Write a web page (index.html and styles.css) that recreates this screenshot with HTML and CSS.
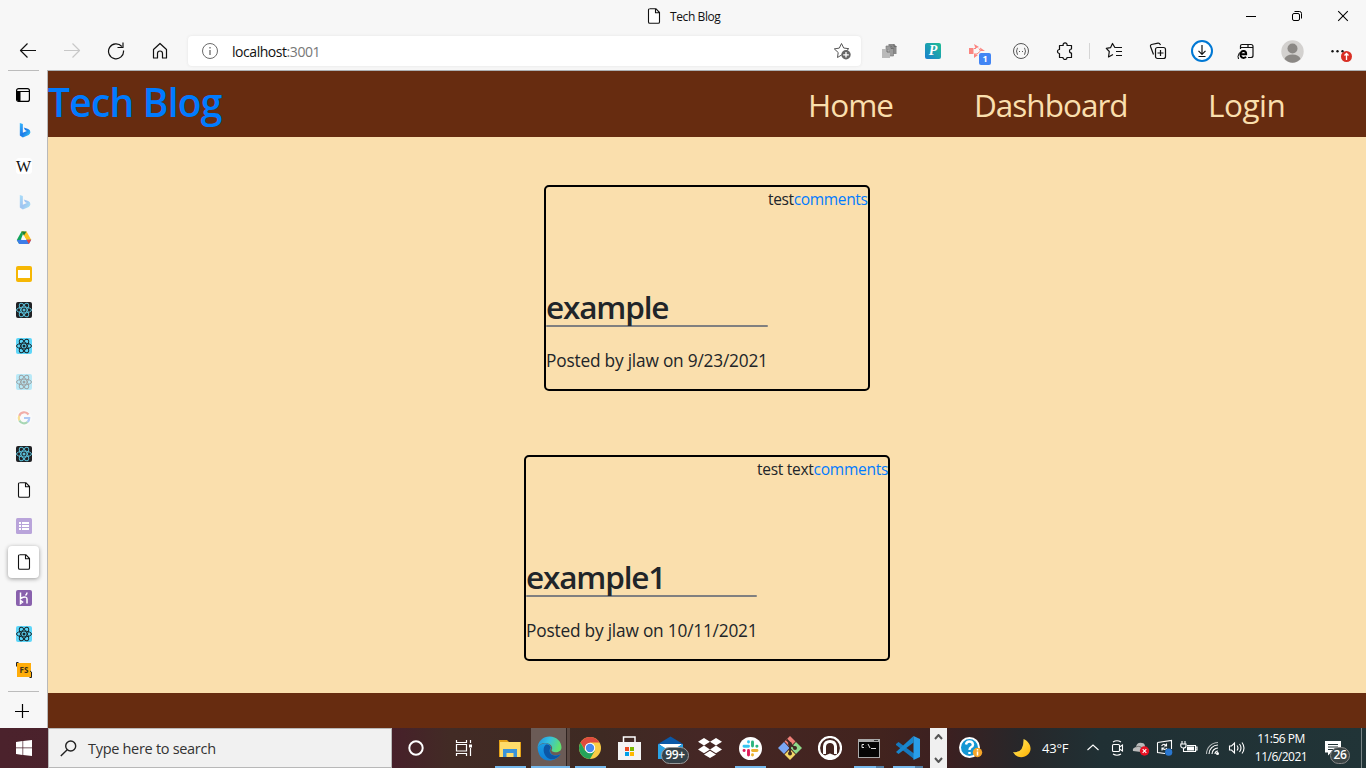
FILE: index.html
```html
<!DOCTYPE html>
<html lang="en">
<head>
<meta charset="utf-8">
<title>Tech Blog</title>
<link rel="stylesheet" href="styles.css">
</head>
<body>
<svg class="defs" width="0" height="0">
  <defs>
    <linearGradient id="bing" x1="0" y1="0" x2="1" y2="1"><stop offset="0" stop-color="#37bdff"/><stop offset=".5" stop-color="#1d78e8"/><stop offset="1" stop-color="#36d1f5"/></linearGradient>
    <linearGradient id="edge1" x1="0" y1="0" x2="1" y2=".3"><stop offset="0" stop-color="#1f8fdc"/><stop offset=".5" stop-color="#35bfe0"/><stop offset="1" stop-color="#5fe070"/></linearGradient>
    <linearGradient id="edge2" x1="0" y1="0" x2="0" y2="1"><stop offset="0" stop-color="#1b9de2"/><stop offset="1" stop-color="#0f7fd6"/></linearGradient>
    <linearGradient id="moon" x1="0" y1="0" x2="1" y2="1"><stop offset="0" stop-color="#fff06a"/><stop offset="1" stop-color="#ffb000"/></linearGradient>
    <symbol id="doc" viewBox="0 0 16 16"><path d="M4 .7H9.8L13.500 4.500V14a1.300 1.300 0 0 1-1.300 1.300H3.800A1.300 1.300 0 0 1 2.500 14V2A1.300 1.300 0 0 1 3.800.700M9.500.900V4.800H13.400" fill="#fff" stroke="#111" stroke-width="1.100" stroke-linejoin="round"/></symbol>
    <symbol id="bingb" viewBox="0 0 16 16"><path d="M3 .5 6.200 1.700V11L10.500 9 8.500 8 7.200 5.200 12 7Q14.300 8 14.300 10.500 14 12.500 12.500 13.200L6.200 16 3 13.800Z" fill="url(#bing)"/></symbol>
    <symbol id="atom" viewBox="0 0 16 16"><g fill="none" stroke="currentColor" stroke-width="1"><ellipse cx="8" cy="8" rx="7.500" ry="2.900"/><ellipse cx="8" cy="8" rx="7.500" ry="2.900" transform="rotate(60 8 8)"/><ellipse cx="8" cy="8" rx="7.500" ry="2.900" transform="rotate(120 8 8)"/></g><circle cx="8" cy="8" r="1.500" fill="currentColor"/></symbol>
  </defs>
</svg>

<div class="titlebar">
  <div class="tab-title"><svg width="16" height="16"><use href="#doc"/></svg><span>Tech Blog</span></div>
  <div class="window-controls">
    <svg width="12" height="12" viewBox="0 0 12 12"><path d="M1 6.500H11" stroke="#000"/></svg>
    <svg width="12" height="12" viewBox="0 0 12 12" fill="none" stroke="#000"><rect x="1.500" y="3.500" width="7" height="7" rx="1.500"/><path d="M3.500 1.500H8.500Q10.500 1.500 10.500 3.500V8.500"/></svg>
    <svg width="12" height="12" viewBox="0 0 12 12"><path d="M1.200 1.200 10.800 10.800M10.800 1.200 1.200 10.800" stroke="#000" stroke-width="1.050"/></svg>
  </div>
</div>

<div class="toolbar">
  <div class="tool"><svg width="18" height="18" viewBox="0 0 18 18"><path d="M17 8.500H1.500M8.500 1.500 1.500 8.500 8.500 15.500" class="line"/></svg></div>
  <div class="tool faded"><svg width="18" height="18" viewBox="0 0 18 18"><path d="M1 8.500H16.500M9.500 1.500 16.500 8.500 9.500 15.500" class="line"/></svg></div>
  <div class="tool"><svg width="18" height="18" viewBox="0 0 18 18"><path d="M16.500 8.500A7.500 7.500 0 1 1 14.800 4.500M16 .5V5.500H10.500" class="line"/></svg></div>
  <div class="tool"><svg width="16" height="18" viewBox="0 0 16 18"><path d="M1.500 7.500 8 1.500 14.500 7.500V16H10.500V11.500Q10.500 9 8 9T5.500 11.500V16H1.500Z" class="line"/></svg></div>
  <div class="address">
    <svg width="18" height="18" viewBox="0 0 18 18" fill="none" stroke="#6b6b6b"><circle cx="9" cy="9" r="7.500"/><path d="M9 8V13M9 5V6.500" stroke-width="1.300"/></svg>
    <span class="url">localhost<span class="port">:3001</span></span>
    <svg class="favorite" width="18" height="18" viewBox="0 0 18 18"><path d="M8.500 1.500 10.700 6 15.800 6.700 12.200 10 8.500 13 4.500 15.500 5.200 10.500 1.300 6.900 6.300 6.100Z" fill="none" stroke="#555" stroke-linejoin="round"/><circle cx="13" cy="12.800" r="4.700" fill="#666"/><path d="M13 10V15.600M10.200 12.800H15.800" stroke="#fff" stroke-width="1.300"/></svg>
  </div>
  <div class="tool"><svg width="16" height="16" viewBox="0 0 16 16"><path d="M7.500 1H13L15.500 3.500V11H7.500Z" fill="#8a8a8a"/><path d="M5 3H10L12.500 5.500V13H5Z" fill="#9c9c9c" stroke="#777" stroke-width=".6"/><path d="M1 6H6L9 9V15H1Z" fill="#bababa"/><path d="M6 6V9H9M10 3V5.500H12.500M13 1V3.500H15.500" fill="none" stroke="#666" stroke-width=".8"/></svg></div>
  <div class="tool"><span class="p-ext">P</span></div>
  <div class="tool badge-host"><svg width="18" height="18" viewBox="0 0 18 18" fill="#fb8580"><path d="M1 6H5.500V12H1ZM6 2 11 5 7.500 6.500ZM12 5.500 17 9 12.500 9ZM6 12 10 13 6 16Z"/><path d="M6 6.500H8M11 6.500 12.500 9 9 12H6" fill="none" stroke="#fb8580"/></svg><span class="ext-badge">1</span></div>
  <div class="tool"><svg width="18" height="18" viewBox="0 0 18 18" fill="none" stroke="#555"><circle cx="9" cy="9" r="7.500"/><path d="M6 6Q5 6 5 7.500T4 9.200Q5 9.200 5 11T6 12.500M12 6Q13 6 13 7.500T14 9.200Q13 9.200 13 11T12 12.500M7 9.500H8M10 9.500H11"/></svg></div>
  <div class="tool"><svg width="18" height="18" viewBox="0 0 18 18"><path d="M3.500 3.500H7.200A2 2 0 1 1 11 3.500H15.500V7A2 2 0 0 0 15.500 11V15.500H11A2 2 0 0 1 7 15.500H3.500V11.500A2 2 0 1 1 3.500 7.500Z" class="line"/></svg></div>
  <div class="toolbar-divider"></div>
  <div class="tool"><svg width="18" height="18" viewBox="0 0 18 18"><path d="M11 5.500 9.700 5.300 7.500 1.500 5.500 5.700 1.300 6.300 4.300 9.500 3.500 15 8 12.500M11 5.500H17M11 9.500H17M11 13.500H17" class="line"/></svg></div>
  <div class="tool"><svg width="18" height="18" viewBox="0 0 18 18"><rect x="6.500" y="5.500" width="10" height="11" rx="2" class="line"/><path d="M11.500 8V14M8.500 11H14.500M4.500 12.500 1.500 4.500Q1 3 2.500 2.500L9 1.200Q10.500 1 11.500 3" class="line"/></svg></div>
  <div class="tool"><svg width="22" height="22" viewBox="0 0 22 22"><circle cx="11" cy="11" r="10" fill="#fff" stroke="#0078d4" stroke-width="2"/><path d="M11 5V14M7.500 10.800 11 14.300 14.500 10.800M7.500 16.500H14.500" class="line"/></svg></div>
  <div class="tool"><svg width="18" height="18" viewBox="0 0 18 18"><path d="M3.500 7V4Q3.500 2.500 5 2.500H14Q16 2.500 16 4.500V13.500Q16 15.500 14 15.500H11M3.500 5.500H16M11 2.500V5.500" class="line"/><path d="M9.200 15Q5.500 17.200 3.800 14.200C2.500 10.500 5 8.700 7 9 9 9.500 9.300 11 9.200 12.300H4" fill="none" stroke="#000" stroke-width="1.900"/><path d="M2.500 10.500Q0 15 1.500 17" fill="none" stroke="#000"/></svg></div>
  <div class="tool profile"><svg width="23" height="23" viewBox="0 0 23 23"><circle cx="11.500" cy="11.500" r="11.200" fill="#d3d1cf"/><circle cx="11.500" cy="8.500" r="5" fill="#8b8885"/><path d="M3.500 19Q5 14.500 11.500 14.500T19.500 19Q16 22.700 11.500 22.700T3.500 19Z" fill="#8b8885"/></svg></div>
  <div class="tool badge-host"><svg width="16" height="18" viewBox="0 0 16 18"><g fill="#111"><circle cx="2.500" cy="9.300" r="1.200"/><circle cx="7.500" cy="9.300" r="1.200"/><circle cx="12.500" cy="9.300" r="1.200"/></g></svg><svg class="alert-badge" width="11" height="11" viewBox="0 0 11 11"><circle cx="5.500" cy="5.500" r="5.500" fill="#d93025"/><path d="M5.500 9V2.500M3.500 4.500 5.500 2.500 7.500 4.500" stroke="#fff" stroke-width="1.300" fill="none"/></svg></div>
</div>

<div class="workspace">
  <nav class="side-tabs">
    <div class="rule"></div>
    <div class="side-list">
      <div><svg width="16" height="16" viewBox="0 0 16 16"><rect x=".6" y="2.600" width="12.800" height="12.800" rx="2" fill="none" stroke="#000" stroke-width="1.200"/><path d="M1 5H4.500V15H2L1 14Z"/><path d="M1 5.500H13" stroke="#000"/></svg></div>
      <div><svg width="15" height="16"><use href="#bingb"/></svg></div>
      <div><span class="wiki">W</span></div>
      <div class="asleep"><svg width="15" height="16"><use href="#bingb"/></svg></div>
      <div><svg width="16" height="16" viewBox="0 0 16 16"><path d="M5.500 1.500H8L3.200 14 .8 10Z" fill="#12a45a"/><path d="M5.500 1.500H10.500L15.300 10H10.300Z" fill="#fcc31e"/><path d="M5.500 1.500H10.500L8 5.500Z" fill="#188038"/><path d="M.8 10 5.800 9.800H15.200L12.900 14H3.200Z" fill="#3d7de8"/><path d="M10.500 9.800H15.200L12.900 14Z" fill="#e9473d"/><path d="M8 6 10.300 9.900H5.700Z" fill="#f7f7f7"/></svg></div>
      <div><svg width="16" height="16"><rect width="16" height="16" rx="2" fill="#f6b704"/><rect x="2" y="4" width="12" height="8" fill="#fff"/></svg></div>
      <div><svg class="react dark" width="16" height="16"><use href="#atom"/></svg></div>
      <div><svg class="react" width="16" height="16"><use href="#atom"/></svg></div>
      <div class="asleep"><svg class="react" width="16" height="16"><use href="#atom"/></svg></div>
      <div class="asleep"><svg class="google" width="16" height="16" viewBox="0 0 16 16" fill="none" stroke-width="2.200"><path d="M12.500 4.500A5.200 5.200 0 0 0 3.300 5.800" stroke="#ea4335"/><path d="M3.300 5.800A5.200 5.200 0 0 0 3.400 10.500" stroke="#fbbc05"/><path d="M3.400 10.500A5.200 5.200 0 0 0 11.500 12" stroke="#34a853"/><path d="M11.500 12A5 5 0 0 0 13.200 8H8" stroke="#4285f4"/></svg></div>
      <div><svg class="react dark" width="16" height="16"><use href="#atom"/></svg></div>
      <div><svg width="16" height="16"><use href="#doc"/></svg></div>
      <div><svg width="16" height="16"><rect width="16" height="16" rx="1.500" fill="#b9a4da"/><path d="M3 5H5M3 8H5M3 11H5M6 5H13M6 8H13M6 11H13" stroke="#fff" stroke-width="1.900"/></svg></div>
      <div><span class="current"><svg width="16" height="16"><use href="#doc"/></svg></span></div>
      <div><svg width="16" height="16"><rect width="16" height="16" rx="2" fill="#8961ad"/><path d="M4.500 2.500V8.500Q11 5.500 11 9V13.500M11 2.500Q11 4 9.500 5.500M4.500 10.500V13.500L6.500 12Z" fill="none" stroke="#fff" stroke-width="1.500"/></svg></div>
      <div><svg class="react" width="16" height="16"><use href="#atom"/></svg></div>
      <div class="badge-host"><span class="fs">FS</span><svg class="fs-braces" width="16" height="16" viewBox="0 0 16 16"><path d="M2.500.5H.5V4.500M13.500 15.500H15.500V10L14 9" fill="none" stroke="#222"/></svg></div>
    </div>
    <div class="rule bottom-rule"></div>
    <svg class="new-tab" width="14" height="14"><path d="M7.500 0V14M0 7.500H14" stroke="#000" stroke-width="1.200"/></svg>
  </nav>

  <div class="page">
    <header class="site-header">
      <a class="brand">Tech Blog</a>
      <nav class="site-nav"><a class="home">Home</a><a class="dash">Dashboard</a><a class="login">Login</a></nav>
    </header>
    <main class="posts">
      <article class="post first">
        <div class="post-info"><h2>example</h2><hr><p>Posted by jlaw on 9/23/2021</p></div>
        <div class="post-text">test<a>comments</a></div>
      </article>
      <article class="post second">
        <div class="post-info"><h2>example1</h2><hr><p>Posted by jlaw on 10/11/2021</p></div>
        <div class="post-text">test text<a>comments</a></div>
      </article>
    </main>
    <footer class="site-footer"></footer>
  </div>
</div>

<div class="taskbar">
  <div class="start"><svg width="16" height="16" viewBox="0 0 16 16" fill="#fff"><path d="M0 2 6.500 1.100V7.500H0ZM7.200 1 16 0V7.500H7.200ZM0 8.300H6.500V15L0 14ZM7.200 8.300H16V16L7.200 15Z"/></svg></div>
  <div class="search"><svg width="17" height="17" viewBox="0 0 17 17" fill="none" stroke="#222" stroke-width="1.400"><circle cx="10.700" cy="6" r="5"/><path d="M7.200 9.700.8 16"/></svg><span>Type here to search</span></div>
  <div class="wide-slot"><svg width="18" height="18"><circle cx="9" cy="9" r="6.700" fill="none" stroke="#fff" stroke-width="2"/></svg></div>
  <div class="wide-slot task-view"><svg width="18" height="16" viewBox="0 0 18 16" fill="none" stroke="#fff" stroke-width="1.200"><path d="M1.500 0V2.500H11.500V0M1.500 16V13.500H11.500V16M1.500 4.500H11.500V11H1.500ZM15.500 0V3M15.500 8V16"/><path d="M14 4.500H17V7.500H14Z" fill="#fff" stroke="none"/></svg></div>
  <div class="app running"><svg width="22" height="19" viewBox="0 0 22 19"><path d="M0 1H8L10 3H22V18H0Z" fill="#e4a218"/><path d="M1 3H21V18H1Z" fill="#ffdc6a"/><path d="M4 10H18V18H14.500V14H7.500V18H4Z" fill="#3993da"/></svg></div>
  <div class="app running active"><svg width="25" height="25" viewBox="0 0 25 25"><path d="M.6 11.500C1 18 4 24.500 12.500 24.500 17 24.500 21.500 22 23.500 18 20 20 16 20 14 17.500 12.500 15.500 13 13.500 14 12 14 9 10 6.500 6.500 7.500Q2 8.500.6 11.500Z" fill="url(#edge2)"/><path d="M9 8.500C5.500 11 6 18 10 21.500 14 25 21 23 23.700 18 20 20.500 15.500 20 13.500 17.500 11.500 14.500 13.500 12 13.800 11.500 13 9 11 8 9 8.500Z" fill="#0c57a5"/><path d="M.5 12C1 5 6 .5 12.500.5 20 .5 24.500 6 24.500 11.500 24.500 15.500 20 17 17 16 14.500 15.500 14.200 14.500 15 13.300 16 11 13.500 7 8.500 7 4.500 7 1.500 9 .5 12Z" fill="url(#edge1)"/></svg></div>
  <div class="app running chrome"><svg width="22" height="22" viewBox="0 0 22 22"><circle cx="11" cy="11" r="11" fill="#f9cc45"/><path d="M1.500 5.500A11 11 0 0 1 20.500 5.500H11L6 13Z" fill="#df4b3e"/><path d="M1.500 5.500A11 11 0 0 0 11 22L15.800 13.800 6.200 13.800Z" fill="#24a35a"/><circle cx="11" cy="11" r="5.200" fill="#fff"/><circle cx="11" cy="11" r="4.200" fill="#4688ef"/></svg></div>
  <div class="app store"><svg width="23" height="25" viewBox="0 0 23 25"><path d="M5.500 7V1H17V7" fill="none" stroke="#fff" stroke-width="1.500"/><path d="M0 6H23V24H0Z" fill="#f4f4f4"/><path d="M7 11H11V15H7Z" fill="#ed4b23"/><path d="M12 11H16V15H12Z" fill="#79b900"/><path d="M7 16H11V20H7Z" fill="#00a0e9"/><path d="M12 16H16V20H12Z" fill="#ffb900"/></svg></div>
  <div class="app badge-host"><svg width="25" height="24" viewBox="0 0 25 24"><path d="M0 8 12.500.5 25 8V23H0Z" fill="#0b58a7"/><path d="M1 8H24L12.500 17Z" fill="#fff"/><path d="M0 8 12.500 15 25 8V23H0Z" fill="#2aa4e7"/></svg><span class="mail-badge">99+</span></div>
  <div class="app"><svg width="24" height="22" viewBox="0 0 24 22" fill="#fff"><path d="M6 1 12 4.800 6 8.600 0 4.800ZM18 1 24 4.800 18 8.600 12 4.800ZM6 8.600 12 12.400 6 16.200 0 12.400ZM18 8.600 24 12.400 18 16.200 12 12.400ZM12 13.700 18 17.400 12 21 6 17.400Z"/></svg></div>
  <div class="app running"><svg width="23" height="23" viewBox="0 0 23 23"><circle cx="11.500" cy="11.500" r="11.500" fill="#fff"/><g fill="none" stroke-width="2.900" stroke-linecap="round"><path d="M9.500 4.800V5M5 9.300H9.500" stroke="#36c5f0"/><path d="M13.500 5V9M17.800 9.300H18" stroke="#2eb67d"/><path d="M13.500 13.500H18M13.500 17.800V18" stroke="#ecb22e"/><path d="M9.500 13.500V18M5 13.500H5.200" stroke="#e01e5a"/></g></svg></div>
  <div class="app"><svg width="24" height="24" viewBox="0 0 24 24"><path d="M12 0 17.500 5.500 12 11 6.500 5.500Z" fill="#ef8078"/><path d="M6 6 11.500 12 6 18 0 12Z" fill="#7aa7f4"/><path d="M18 6 24 12 18 18 12.500 12Z" fill="#8fd98b"/><path d="M12 13 17.500 18.500 12 24 6.500 18.500Z" fill="#f2d667"/><path d="M8.500 3.500 12 7V18M12 8 17 12" fill="none" stroke="#3e2924" stroke-width="1.900"/><g fill="#3e2924"><circle cx="12" cy="8" r="2"/><circle cx="17" cy="12" r="2"/><circle cx="12" cy="17.500" r="2"/></g></svg></div>
  <div class="app"><svg width="24" height="24" viewBox="0 0 24 24"><circle cx="12" cy="12" r="11" fill="none" stroke="#fff" stroke-width="2.200"/><path d="M6.500 18V10.500Q7 5.500 12 5.500T17.500 10.500V18" fill="none" stroke="#fff" stroke-width="3"/><path d="M2.500 17 7 19.500 12 17.500 17 19.500 21.500 17 17 22 12 23.500 7 22Z" fill="#fff"/></svg></div>
  <div class="app running grouped terminal"><svg width="22" height="19" viewBox="0 0 22 19"><rect width="22" height="19" fill="#aaa"/><rect x="1" y="3" width="20" height="15" fill="#050505"/><path d="M16 1.500H20" stroke="#333"/><path d="M6 5.500H4V8.500H6M8 6V6.200M8 8V8.200M10 5 12 9M13 9.500H18" fill="none" stroke="#ddd"/></svg></div>
  <div class="app running grouped"><svg width="24" height="24" viewBox="0 0 24 24"><path d="M0 8 2.500 6 18 17.500V23L0 9Z" fill="#1678bd"/><path d="M0 16 17.500 0V6.500L2.500 18Z" fill="#1886cd"/><path d="M17.500 0 24 3V21L17.500 24Z" fill="#299de8"/></svg></div>
  <div class="task-scroll"><svg width="9" height="6"><path d="M1 5 4.500 1 8 5" fill="none" stroke="#555" stroke-width="2"/></svg><svg width="9" height="6"><path d="M1 1 4.500 5 8 1" fill="none" stroke="#555" stroke-width="2"/></svg></div>
  <div class="help"><svg width="24" height="22" viewBox="0 0 24 22"><circle cx="10.500" cy="10.500" r="9.500" fill="#1597d4" stroke="#fff" stroke-width="2"/><path d="M7 7.500Q7.500 4.500 10.500 4.500T14 7.700Q14 9.200 12 10.200 10.500 11 10.500 13M10.500 15V17" fill="none" stroke="#fff" stroke-width="2.400"/><circle cx="18.500" cy="15.500" r="4.700" fill="#f6a528"/><path d="M18.500 14.500V18.500M18.500 12V13.500" stroke="#fff" stroke-width="1.500"/></svg></div>
  <div class="weather"><svg width="18" height="19" viewBox="0 0 18 19"><path d="M10.500 0C20 4 20 16 10 18Q3 19 0 13Q11 14.500 10.500 0Z" fill="url(#moon)"/></svg><span>43°F</span></div>
  <div class="tray">
    <svg width="14" height="16" viewBox="0 0 14 16"><path d="M1.500 10 7 5 12.500 10"/></svg>
    <svg width="16" height="18" viewBox="0 0 16 18"><rect x="3.500" y="5.500" width="7" height="7" rx="1"/><path d="M10.500 8 13.500 6V12L10.500 10M4 3Q8 .5 12 3M4 15Q8 17.500 12 15"/></svg>
    <svg width="18" height="16" viewBox="0 0 18 16"><path d="M1 11Q0 8 4 7 5 2 10 3 13 3 13 7L15 9 9 12Z" fill="#bbb" stroke="none"/><path d="M4 7Q7 5 10 8" stroke="#777"/><circle cx="12.500" cy="11" r="4.700" fill="#e81123" stroke="none"/><path d="M10.700 9.200 14.300 12.800M14.300 9.200 10.700 12.800"/></svg>
    <svg width="18" height="18" viewBox="0 0 18 18"><path d="M1.500 3.500 15.500 1.500V10M1.500 3.500V13.500L9 14.500M5.500 7Q8 3.500 10.500 7M10.500 4.500V7H8M11 9Q8.500 12 6 9M6 11.500V9H8.500"/><circle cx="12.700" cy="13.200" r="3.600" fill="#2977d0" stroke="none"/></svg>
    <svg width="18" height="16" viewBox="0 0 18 16"><path d="M2 1V4M5 1V4M.8 4H6V6Q6 8 3.500 8T.8 6ZM3.500 8V11.500H15.500V5.500H7M15.500 7H17V10H15.500"/><rect x="7" y="6.500" width="7" height="4" fill="#fff" stroke="none"/></svg>
    <svg width="16" height="18" viewBox="0 0 16 18"><path d="M4 15A9 9 0 0 1 13 6M7 15A6 6 0 0 1 13 9M10 15A3 3 0 0 1 13 12"/><path d="M1.500 15A11.500 11.500 0 0 1 13 3.500" opacity=".65"/><circle cx="12.500" cy="14.500" r="1.500" fill="#fff" stroke="none"/></svg>
    <svg width="18" height="16" viewBox="0 0 18 16"><path d="M1.500 6H3.500L6.500 3V13L3.500 10H1.500ZM9 5.500Q11 8 9 10.500M11.500 4Q14.500 8 11.500 12M14 2.500Q18 8 14 13.500"/></svg>
  </div>
  <div class="clock"><span>11:56 PM</span><span>11/6/2021</span></div>
  <div class="notify badge-host"><svg width="16" height="16" viewBox="0 0 16 16"><path d="M0 1H16V12.500H6L3 15.500V12.500H0Z" fill="#fff"/><path d="M3 4.500H13M3 7H13M3 9.500H9" stroke="#213234"/></svg><span class="count-badge">26</span></div>
  <div class="show-desktop"></div>
</div>
</body>
</html>
```
FILE: styles.css
```css
* { box-sizing: border-box; }
body { margin: 0; width: 1366px; height: 768px; overflow: hidden; display: flex; flex-direction: column; background: #f7f7f7; font-family: "Open Sans", "Noto Sans", sans-serif; color: #111; }
svg { display: block; flex: none; }
.defs { position: absolute; }
.line { fill: none; stroke: #111; stroke-width: 1.200; stroke-linejoin: round; }
.badge-host { position: relative; }

.titlebar { display: flex; height: 32px; padding-left: 646px; justify-content: space-between; }
.tab-title { display: flex; align-items: center; gap: 8px; font-size: 12px; letter-spacing: -.4px; white-space: nowrap; }
.window-controls { display: grid; grid-template-columns: repeat(3, 46px); place-items: center; }

.toolbar { display: flex; height: 38px; padding-left: 6px; align-items: center; }
.tool { flex: none; width: 44px; height: 30px; display: grid; place-items: center; }
.faded { opacity: .2; }
.address { width: 673px; height: 30px; margin: 0 6px; padding: 0 10px 0 13px; background: #fff; border-radius: 4px; box-shadow: 0 0 3px #e2e2e2; display: flex; align-items: center; }
.url { margin-left: 13px; font-size: 14px; letter-spacing: -.45px; }
.port { color: #777; }
.favorite { margin-left: auto; }
.p-ext { width: 16px; height: 16px; background: linear-gradient(45deg, #1a7fd0, #1fbf93); color: #fff; border-radius: 2px; font: italic bold 14px/16px "Liberation Serif", serif; text-align: center; }
.ext-badge { position: absolute; left: 24px; top: 17px; width: 12px; height: 12px; border-radius: 2px; background: #4285f4; color: #fff; font: bold 9px/12px "Open Sans", sans-serif; text-align: center; }
.toolbar-divider { flex: none; width: 1px; height: 16px; margin: 0 2px; background: #d5d5d5; }
.profile { width: 48px; }
.alert-badge { position: absolute; left: 25px; top: 15px; }

.workspace { display: flex; height: 658px; }
.side-tabs { width: 48px; flex: none; border-right: 1px solid #b9b9b9; }
.rule { height: 1px; width: 31px; margin-left: 8px; background: #bcbcbc; }
.side-list { margin-top: 5px; display: grid; grid-auto-rows: 36px; }
.side-list > div { display: grid; place-items: center; width: 48px; }
.asleep { opacity: .4; }
.wiki { width: 16px; height: 16px; border-radius: 3px; background: #fff; font: 16px/17px "Liberation Serif", serif; text-align: center; text-indent: -1px; }
.react { border-radius: 2px; background: #5dd6f9; color: #17272c; }
.react.dark { background: #202124; color: #58bed7; }
.google { background: #fff; border-radius: 8px; }
.current { width: 31px; height: 32px; border-radius: 4px; background: #fff; box-shadow: 0 1px 4px #999; display: grid; place-items: center; margin-right: 1px; }
.fs { width: 14px; height: 14px; background: #ffad0a; color: #3b3018; font: bold 8px/14px "Open Sans", sans-serif; text-align: center; }
.fs-braces { position: absolute; left: 16px; top: 10px; }
.bottom-rule { margin-top: 3px; }
.new-tab { margin: 12px 0 0 15px; }

.page { flex: 1; border-top: 1px solid #adb0b2; display: flex; flex-direction: column; }
.site-header { height: 66px; background: #672c10; display: flex; justify-content: space-between; white-space: nowrap; }
.brand { color: #007bff; font-weight: 600; font-size: 39px; line-height: 62px; letter-spacing: -.8px; }
.site-nav { display: flex; gap: 80px; padding-right: 80px; color: #fadfad; font-size: 31.500px; line-height: 67px; letter-spacing: -1px; }
.home { width: 86px; }
.dash { width: 154px; }
.login { width: 78px; letter-spacing: -.5px; }
.posts { height: 556px; background: #fadfad; padding-top: 48px; display: flex; flex-direction: column; align-items: center; gap: 64px; color: #212529; }
.post { height: 206px; border: 2px solid #000; border-radius: 5px; display: flex; }
.first { width: 326px; }
.second { width: 366px; }
.post-info { width: 222px; padding-top: 102px; white-space: nowrap; }
.second .post-info { width: 231px; }
.post h2 { margin: 0; font-size: 31.500px; font-weight: 600; line-height: 36px; letter-spacing: -1.150px; }
.post hr { margin: 0; border: 0; height: 2px; background: #808080; border-radius: 1px; }
.post p { margin: 20px 0 0; font-size: 17.300px; line-height: 28px; letter-spacing: -.2px; }
.post-text { font-size: 15.500px; line-height: 24px; letter-spacing: -.35px; white-space: nowrap; }
.second .post-text { letter-spacing: -.27px; }
.post-text a { color: #007bff; }
.site-footer { flex: 1; background: #672c10; }

.taskbar { display: flex; height: 40px; color: #fff; background: linear-gradient(90deg, #4b222c 0, #47202a 392px, #422b25 450px, #3e2a23 600px, #452725 700px, #42231e 880px, #3b2021 950px, #27272a 1020px, #203034 1100px, #213437 1366px); }
.taskbar > div { flex: none; }
.start { width: 48px; display: grid; place-items: center; }
.search { width: 344px; border: 1px solid #b8b8b8; background: #f1f1f1; color: #333; display: flex; align-items: center; gap: 11px; padding-left: 11px; font-size: 14.500px; letter-spacing: -.3px; }
.wide-slot { width: 48px; display: grid; place-items: center; }
.task-view { margin-right: 2px; }
.app { width: 40px; display: grid; place-items: center; }
.running { background: linear-gradient(#76b9ed, #76b9ed) center bottom / 31px 2px no-repeat; }
.active { background: linear-gradient(#76b9ed, #76b9ed) center bottom / 40px 2px no-repeat, linear-gradient(90deg, #6b5b56 35px, #302421 35px, #302421 36px, #5b4943 36px); width: 39px; margin-left: 1px; padding-right: 3px; }
.store { padding-right: 2px; }
.terminal { width: 38px; }
.grouped { background: linear-gradient(90deg, #76b9ed 22px, #527fa5 22px) center bottom / 30px 2px no-repeat; }
.mail-badge { position: absolute; left: 11px; top: 19px; width: 28px; height: 17px; border-radius: 9px; border: 1px solid #999; background: #354249; font: 600 12px/14px "Open Sans", sans-serif; letter-spacing: -.3px; text-align: center; }
.task-scroll { width: 17px; margin-left: 2px; background: #f0f0f0; display: flex; flex-direction: column; justify-content: space-between; align-items: center; padding: 6px 0 5px; }
.help { width: 48px; display: grid; place-items: center; }
.weather { width: 84px; display: flex; align-items: center; gap: 11px; padding-left: 18px; font-size: 13px; letter-spacing: -.2px; }
.tray { width: 170px; display: grid; grid-template-columns: repeat(7, 24px); place-items: center; padding-left: 2px; fill: none; stroke: #fff; stroke-width: 1.100; }
.clock { width: 64px; display: flex; flex-direction: column; align-items: center; padding-top: 2px; font-size: 12px; line-height: 18px; letter-spacing: -.5px; white-space: nowrap; }
.notify { width: 40px; display: grid; place-items: center; }
.count-badge { position: absolute; left: 17px; top: 19px; width: 20px; height: 17px; border: 1px solid #888; border-radius: 9px; background: #3a4445; font: 600 12px/14px "Open Sans", sans-serif; letter-spacing: -.3px; text-align: center; }
.show-desktop { width: 5px; border-left: 1px solid #798486; margin-left: auto; }
```
